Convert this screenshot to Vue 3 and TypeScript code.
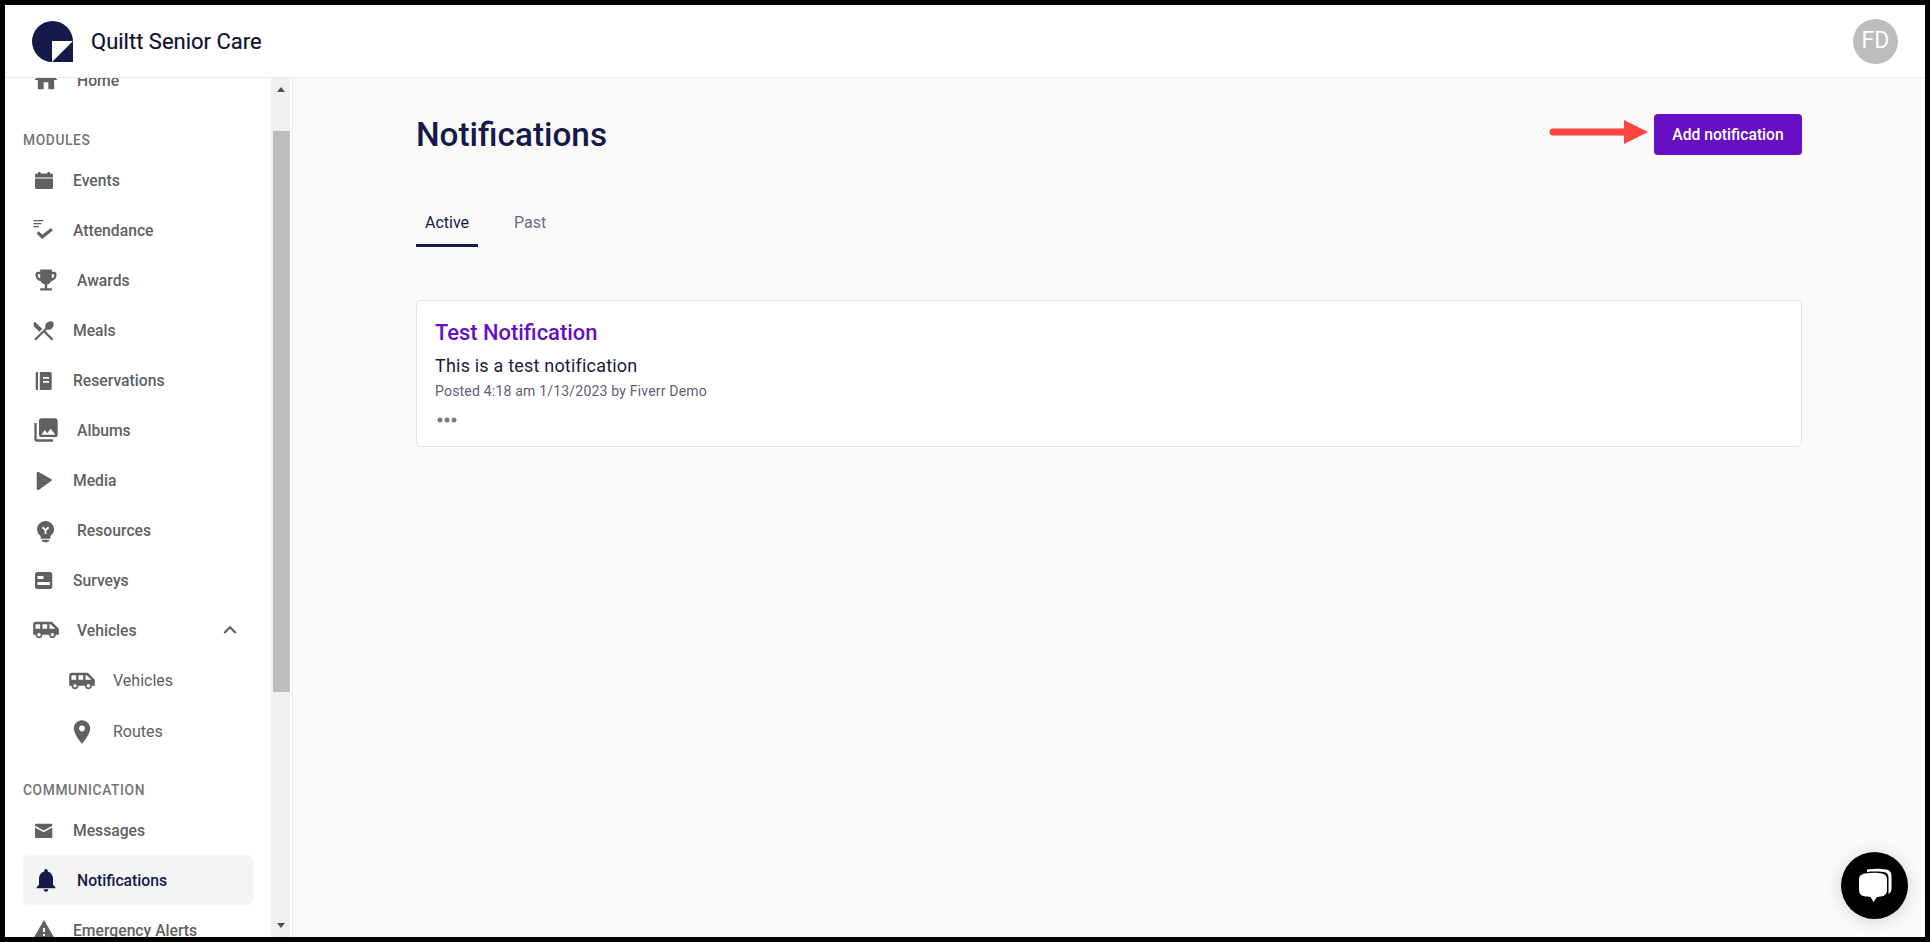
<script setup lang="ts">
  interface NavItem {
    label: string
    icon: string
    wide?: boolean
    sub?: boolean
    active?: boolean
    chevron?: boolean
  }

  interface NavGroup {
    title?: string
    items: NavItem[]
  }

  const icons: Record<string, string> = {
    home: 'M10 20v-6h4v6h5v-8h3L12 3 2 12h3v8z',
    event: 'M6 4h2.5v1.5h7V4H18v1.5h1.5A1.5 1.5 0 0 1 21 7v2.5H3V7a1.5 1.5 0 0 1 1.5-1.5H6zM3 10.5h18v9a1.5 1.5 0 0 1-1.5 1.5h-15A1.5 1.5 0 0 1 3 19.5z',
    attendance: 'M1.5 2h10v1.2h-10zM1.5 5h8v1.2h-8zM1.5 8h5.5v1.2H1.5zM4.5 15.5l2.2-2.2 3.6 3.4 8.6-6.7 2 2.4-10.8 8.6z',
    trophy: 'M19 5h-2V3H7v2H5c-1.1 0-2 .9-2 2v1c0 2.55 1.92 4.63 4.39 4.94.63 1.5 1.98 2.63 3.61 2.96V19H7v2h10v-2h-4v-3.1c1.63-.33 2.98-1.46 3.61-2.96C19.08 12.63 21 10.55 21 8V7c0-1.1-.9-2-2-2zM5 8V7h2v3.82C5.84 10.4 5 9.3 5 8zm14 0c0 1.3-.84 2.4-2 2.82V7h2v1z',
    meals: 'M7.4 13.8l2.83-2.83L2.71 3.5c-1.56 1.56-1.56 4.09 0 5.66l4.69 4.64zm7.48-2.27c1.53.71 3.68.21 5.27-1.38 1.91-1.91 2.28-4.65.81-6.12-1.46-1.46-4.2-1.1-6.12.81-1.59 1.59-2.09 3.74-1.38 5.27L2.2 21.1l1.61 1.4L11.8 14.6l7.9 7.9 1.6-1.5L13.41 13l1.47-1.47z',
    book: 'M5 4h1v18H5a1.3 1.3 0 0 1-1.3-1.3V5.3A1.3 1.3 0 0 1 5 4zM7.8 4h10.4a1.5 1.5 0 0 1 1.5 1.5v15a1.5 1.5 0 0 1-1.5 1.5H7.8zM11 9v1.8h6V9zM11 13v1.8h6V13z',
    albums: 'M22 16V4c0-1.1-.9-2-2-2H8c-1.1 0-2 .9-2 2v12c0 1.1.9 2 2 2h12c1.1 0 2-.9 2-2zm-11-4l2.03 2.71L16 11l4 5H8l3-4zM2 6v14c0 1.1.9 2 2 2h14v-2H4V6H2z',
    play: 'M4.7 5.2c0-1 1.1-1.6 1.9-1.1l12.5 6.8c.9.5.9 1.7 0 2.2L6.6 21.9c-.8.5-1.9-.1-1.9-1.1z',
    bulb: 'M11.6 4.2c-4 0-7.3 3.2-7.3 7.2 0 2.4 1.2 4.5 3.1 5.8v1.4c0 .5.4.9.9.9h6.6c.5 0 .9-.4.9-.9v-1.4c1.9-1.3 3.1-3.4 3.1-5.8 0-4-3.3-7.2-7.3-7.2zm.8 11.2h-1.6v-3l-2.3-2.2 1.1-1.1 2 2 2-2 1.1 1.1-2.3 2.2zM8.4 20.4h6.4v.6c0 .5-.4.9-.9.9h-.3c-.3.5-1 .8-2 .8s-1.7-.3-2-.8h-.3c-.5 0-.9-.4-.9-.9z',
    surveys: 'M5.5 4h12.3a2.5 2.5 0 0 1 2.5 2.5v12a2.5 2.5 0 0 1-2.5 2.5H5.5A2.5 2.5 0 0 1 3 18.5v-12A2.5 2.5 0 0 1 5.5 4zM5.5 8v3h6V8zM5.5 14v3h12.3v-3z',
    van: 'M17 5H3c-1.1 0-2 .89-2 2v9h2c0 1.65 1.34 3 3 3s3-1.35 3-3h5.5c0 1.65 1.34 3 3 3s3-1.35 3-3H23v-5l-6-6zM3 11V7h4v4H3zm3 6.5c-.83 0-1.5-.67-1.5-1.5s.67-1.5 1.5-1.5 1.5.67 1.5 1.5-.67 1.5-1.5 1.5zM13 11H9V7h4v4zm4.5 6.5c-.83 0-1.5-.67-1.5-1.5s.67-1.5 1.5-1.5 1.5.67 1.5 1.5-.67 1.5-1.5 1.5zM15 11V7h1l4 4h-5z',
    room: 'M12 2C8.13 2 5 5.13 5 9c0 5.25 7 13 7 13s7-7.75 7-13c0-3.87-3.13-7-7-7zm0 9.5c-1.38 0-2.5-1.12-2.5-2.5s1.12-2.5 2.5-2.5 2.5 1.12 2.5 2.5-1.12 2.5-2.5 2.5z',
    mail: 'M4 5.7h15.3a1 1 0 0 1 1 1v1.1l-8.65 4.8L3 7.8V6.7a1 1 0 0 1 1-1zM3 9.5l8.65 4.8 8.65-4.8V19a1 1 0 0 1-1 1H4a1 1 0 0 1-1-1z',
    bell: 'M12 22c1.1 0 2-.9 2-2h-4c0 1.1.89 2 2 2zm6-6v-5c0-3.07-1.64-5.64-4.5-6.32V4c0-.83-.67-1.5-1.5-1.5s-1.5.67-1.5 1.5v.68C7.63 5.36 6 7.92 6 11v5l-2 2v1h16v-1l-2-2z',
    warning: 'M1 21h22L12 2 1 21zm12-3h-2v-2h2v2zm0-4h-2v-4h2v4z',
  }

  const groups: NavGroup[] = [
    { items: [{ label: 'Home', icon: 'home', wide: true }] },
    {
      title: 'MODULES',
      items: [
        { label: 'Events', icon: 'event' },
        { label: 'Attendance', icon: 'attendance' },
        { label: 'Awards', icon: 'trophy', wide: true },
        { label: 'Meals', icon: 'meals' },
        { label: 'Reservations', icon: 'book' },
        { label: 'Albums', icon: 'albums', wide: true },
        { label: 'Media', icon: 'play' },
        { label: 'Resources', icon: 'bulb', wide: true },
        { label: 'Surveys', icon: 'surveys' },
        { label: 'Vehicles', icon: 'van', wide: true, chevron: true },
        { label: 'Vehicles', icon: 'van', wide: true, sub: true },
        { label: 'Routes', icon: 'room', wide: true, sub: true },
      ],
    },
    {
      title: 'COMMUNICATION',
      items: [
        { label: 'Messages', icon: 'mail' },
        { label: 'Notifications', icon: 'bell', wide: true, active: true },
        { label: 'Emergency Alerts', icon: 'warning' },
      ],
    },
  ]
</script>

<template>
  <div class="page">
    <header class="topbar">
      <svg class="logo" width="41" height="41" viewBox="0 0 41 41">
        <path d="M20.5 0A20.5 20.5 0 0 0 20.5 41H41V20.5A20.5 20.5 0 0 0 20.5 0z" fill="#151a4a" />
        <path d="M20 20H41L20 41z" fill="#fff" />
      </svg>
      <span class="brand">Quiltt Senior Care</span>
      <span class="avatar">FD</span>
    </header>

    <div class="body">
      <aside class="sidebar">
        <nav class="nav">
          <template v-for="group in groups" :key="group.title">
            <div v-if="group.title" class="nav-title">{{ group.title }}</div>
            <a
              v-for="item in group.items"
              :key="item.label + item.icon + item.sub"
              class="nav-item"
              :class="{ sub: item.sub, active: item.active, wide: item.wide }"
            >
              <svg class="nav-icon" viewBox="0 0 24 24">
                <path :d="icons[item.icon]" fill="currentColor" fill-rule="evenodd" />
              </svg>
              <span class="nav-label">{{ item.label }}</span>
              <svg v-if="item.chevron" class="chevron" viewBox="0 0 24 24" width="26" height="26">
                <path d="M12 8l-6 6 1.41 1.41L12 10.83l4.59 4.58L18 14z" fill="currentColor" />
              </svg>
            </a>
          </template>
        </nav>
        <div class="scrollbar">
          <span class="arrow up"></span>
          <div class="track"><div class="thumb"></div></div>
          <span class="arrow down"></span>
        </div>
      </aside>

      <main class="main">
        <div class="heading">
          <h1>Notifications</h1>
          <div class="action">
            <svg class="pointer" width="100" height="26" viewBox="0 0 100 26">
              <path d="M4 9.5H75V1L99 13 75 25V16.5H4a3.5 3.5 0 0 1 0-7z" fill="#ff4444" />
            </svg>
            <button class="add">Add notification</button>
          </div>
        </div>

        <div class="tabs">
          <span class="tab current">Active</span>
          <span class="tab">Past</span>
        </div>

        <section class="card">
          <h2>Test Notification</h2>
          <p class="text">This is a test notification</p>
          <p class="meta">Posted 4:18 am 1/13/2023 by Fiverr Demo</p>
          <svg class="dots" width="20" height="6" viewBox="0 0 20 6">
            <circle cx="3" cy="3" r="2.5" />
            <circle cx="10" cy="3" r="2.5" />
            <circle cx="17" cy="3" r="2.5" />
          </svg>
        </section>
      </main>
    </div>

    <button class="chat">
      <svg width="40" height="40" viewBox="0 0 40 40">
        <path d="M12 3.5C19 2.5 26 2.5 31 3.5 35 4.3 36.5 6.5 36.5 10V22C36.5 25 35.5 27 33.5 28V12C33.5 8 32 6.5 28 6 23 5.4 17 5.4 12 6z" fill="#fff" />
        <path d="M10 7.5C16 6.6 23 6.6 27 7.5 30.5 8.3 32 10 32 13.5V23C32 27.5 30.5 29.5 27 30.3 25 30.7 23.5 30.9 22 31L18.5 36 15.5 31C13 30.9 11.5 30.7 9.5 30.3 5.5 29.5 4 27.5 4 23V13.5C4 10 6 8.2 10 7.5z" fill="#fff" />
      </svg>
    </button>
  </div>
</template>

<style scoped>
  .page {
    position: relative;
    display: flex;
    flex-direction: column;
    box-sizing: border-box;
    width: 1930px;
    height: 942px;
    border: 5px solid #000;
    overflow: hidden;
    background: #fbfaf8;
    font-family: Roboto, "Liberation Sans", sans-serif;
  }

  .topbar {
    display: flex;
    align-items: center;
    flex: none;
    height: 73px;
    padding: 0 27px;
    box-sizing: border-box;
    background: #fff;
    border-bottom: 1px solid #ececec;
  }

  .logo {
    flex: none;
    margin-right: 18px;
  }

  .brand {
    font-size: 22px;
    font-weight: 400;
    color: #10122e;
    -webkit-text-stroke: 0.2px #10122e;
  }

  .avatar {
    display: flex;
    align-items: center;
    justify-content: center;
    box-sizing: border-box;
    width: 45px;
    height: 45px;
    padding-bottom: 2px;
    margin-left: auto;
    border-radius: 50%;
    background: #bdbdbd;
    color: #fff;
    font-size: 23px;
  }

  .body {
    display: flex;
    flex: 1;
    min-height: 0;
  }

  .sidebar {
    display: flex;
    flex: none;
    width: 288px;
    box-sizing: border-box;
    padding-right: 2px;
    background: #fff;
    border-right: 1px solid #ececec;
  }

  .nav {
    flex: 1;
    min-width: 0;
    padding: 0 18px;
    overflow: hidden;
  }

  .nav > :first-child {
    margin-top: -23px;
  }

  .nav-title {
    display: flex;
    align-items: flex-end;
    height: 50px;
    box-sizing: border-box;
    padding-bottom: 8.5px;
    font-size: 13.8px;
    font-weight: 500;
    letter-spacing: 0.6px;
    line-height: 14px;
    color: #757575;
  }

  .nav-item.sub + .nav-title {
    height: 48px;
  }

  .nav-item {
    display: flex;
    align-items: center;
    height: 50px;
    padding: 0 10px 0 9px;
    gap: 17px;
    border-radius: 6px;
    font-size: 15.7px;
    font-weight: 500;
    color: #616161;
  }

  .nav-item.sub {
    height: 51px;
    padding-left: 45px;
    font-size: 16px;
    font-weight: 400;
  }

  .nav-item.active {
    background: #f4f4f4;
    color: #151a4a;
  }

  .nav-icon {
    flex: none;
    width: 24px;
    height: 24px;
  }

  .nav-item.wide .nav-icon {
    width: 28px;
    height: 28px;
  }

  .nav-label {
    white-space: nowrap;
  }

  .chevron {
    margin-left: auto;
  }

  .scrollbar {
    display: flex;
    flex: none;
    flex-direction: column;
    width: 19px;
    background: #f0f0f0;
  }

  .arrow {
    flex: none;
    width: 0;
    height: 0;
    margin: 0 auto;
    border-left: 4.5px solid transparent;
    border-right: 4.5px solid transparent;
  }

  .arrow.up {
    margin-top: 9px;
    margin-bottom: 8px;
    border-bottom: 5px solid #505050;
  }

  .arrow.down {
    margin-top: 8px;
    margin-bottom: 9px;
    border-top: 5px solid #505050;
  }

  .track {
    flex: 1;
    padding-top: 31px;
  }

  .thumb {
    height: 561px;
    margin-left: 2px;
    background: #bdbdbd;
  }

  .main {
    flex: 1;
    min-width: 0;
    padding: 0 123px;
  }

  .heading {
    display: flex;
    align-items: center;
    justify-content: space-between;
    box-sizing: border-box;
    height: 82px;
    padding-top: 31px;
  }

  h1 {
    margin: 0;
    font-size: 33.3px;
    font-weight: 500;
    color: #151a4a;
  }

  .action {
    display: flex;
    align-items: center;
    position: relative;
  }

  .pointer {
    position: absolute;
    right: 153px;
    top: 5px;
  }

  .add {
    width: 148px;
    height: 41px;
    border: 0;
    border-radius: 4px;
    background: #6610c4;
    color: #fff;
    font-family: inherit;
    font-size: 15.7px;
    font-weight: 500;
  }

  .tabs {
    display: flex;
    gap: 27px;
    margin-top: 42px;
  }

  .tab {
    padding: 11px 9px;
    font-size: 16px;
    line-height: 20px;
    color: #6a6b87;
  }

  .tab.current {
    color: #151a4a;
    border-bottom: 3px solid #151a4a;
  }

  .card {
    box-sizing: border-box;
    height: 147px;
    margin-top: 53px;
    padding: 17px 18px;
    background: #fff;
    border: 1px solid #e2e2e2;
    border-radius: 5px;
  }

  h2 {
    margin: 0;
    font-size: 21.9px;
    line-height: 30px;
    font-weight: 500;
    color: #6610c4;
  }

  .text {
    margin: 6px 0 0;
    font-size: 18px;
    line-height: 24px;
    letter-spacing: 0.2px;
    color: #1b1c3a;
  }

  .meta {
    margin: 3px 0 0;
    font-size: 14px;
    line-height: 20px;
    letter-spacing: 0.2px;
    color: #5f6077;
  }

  .dots {
    display: block;
    margin: 16px 0 0 2px;
    fill: #7a7a7a;
  }

  .chat {
    position: absolute;
    right: 17px;
    bottom: 18px;
    display: flex;
    align-items: center;
    justify-content: center;
    width: 67px;
    height: 67px;
    padding: 0;
    border: 0;
    border-radius: 50%;
    background: #000;
    box-shadow: 0 2px 16px rgba(0, 0, 0, 0.16);
  }
</style>

<style>
  html, body {
    margin: 0;
    background: #000;
  }
</style>
